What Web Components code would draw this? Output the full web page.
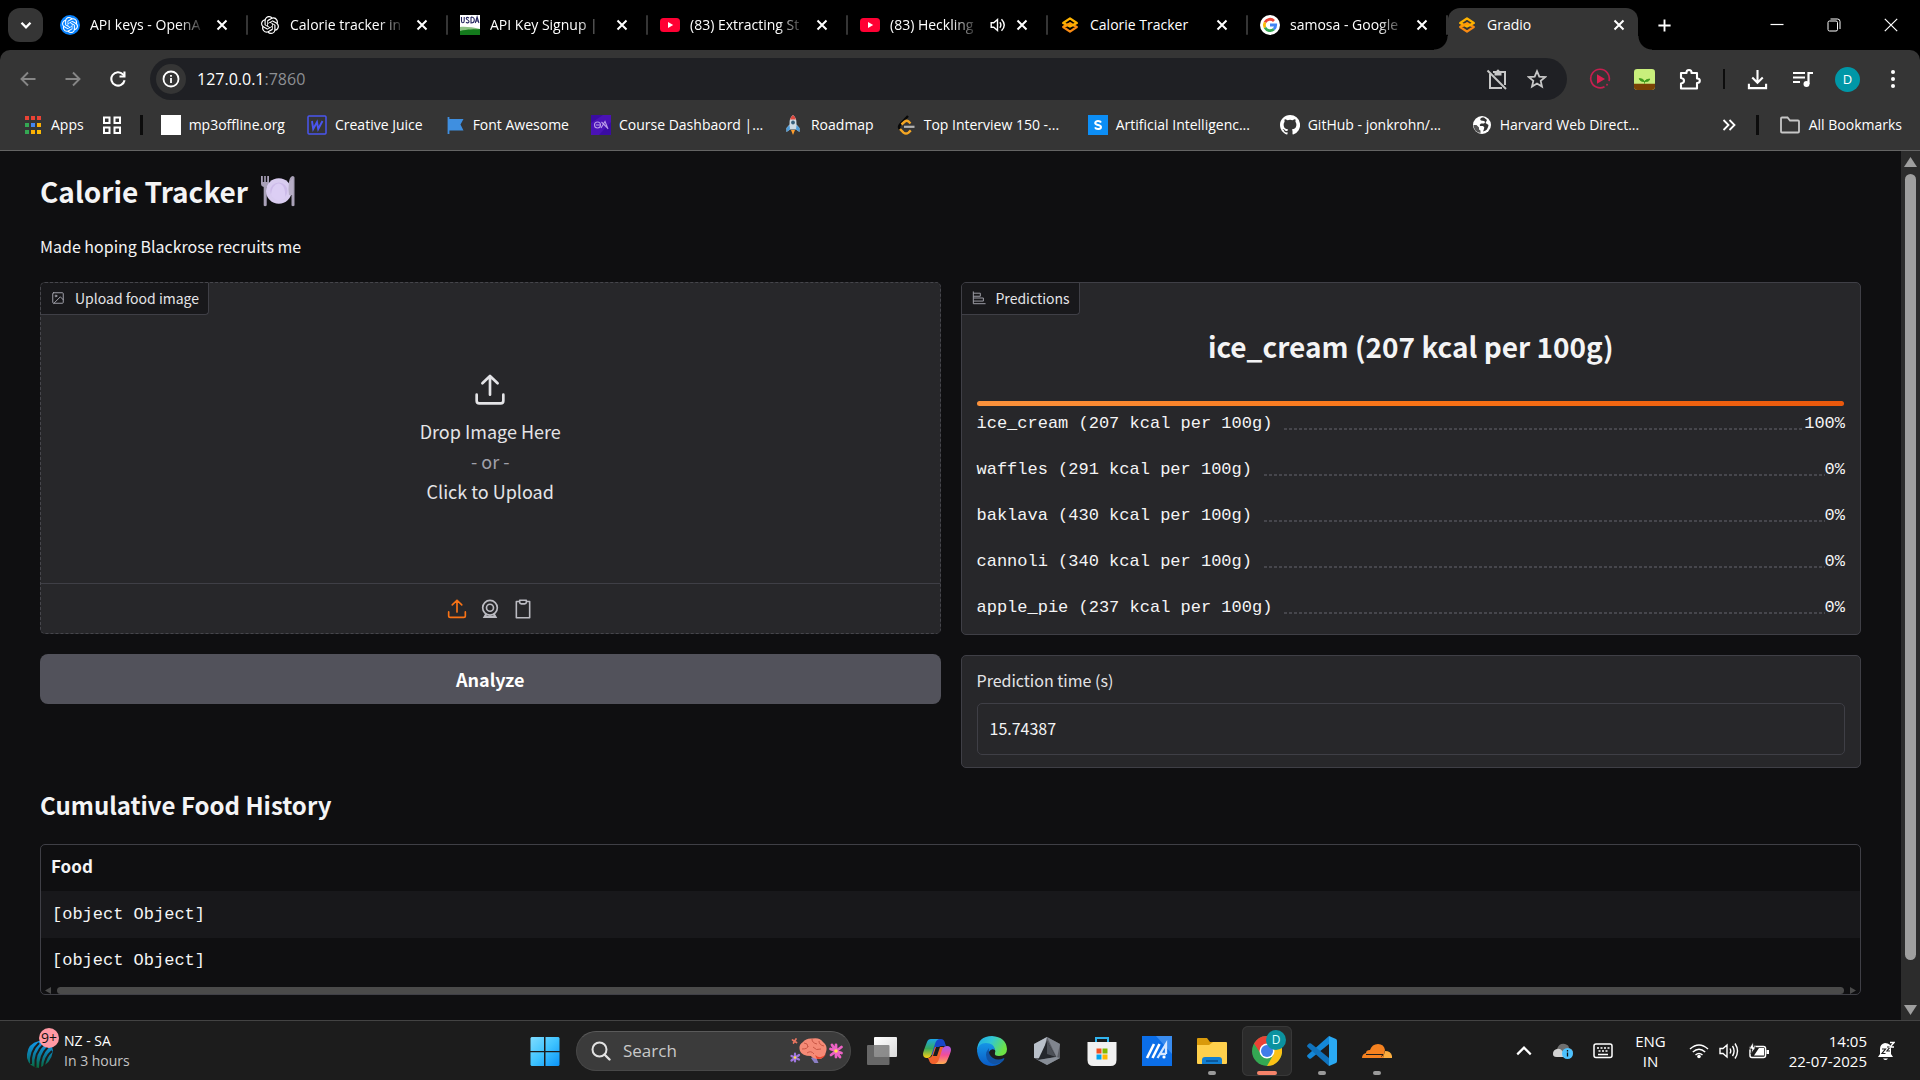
<!DOCTYPE html>
<html lang="en">
<head>
<meta charset="utf-8">
<title>Gradio</title>
<style>
  html, body { margin: 0; height: 100%; background: #0f0f11; }
  body { overflow: hidden; font-family: "Open Sans", "Noto Sans", sans-serif; color: #fff; }
</style>
</head>
<body>
<desktop-shell></desktop-shell>
<script>
const ICONS = {
  chevdown: ['0 0 20 20', '<path d="M5 7.5l5 5 5-5" fill="none" stroke="currentColor" stroke-width="2.6"/>'],
  x: ['0 0 12 12', '<path d="M1.5 1.5l9 9M10.500 1.500l-9 9" stroke="currentColor" stroke-width="2"/>'],
  knot: ['0 0 24 24', '<path fill="currentColor" d="M22.2819 9.8211a5.9847 5.9847 0 0 0-.5157-4.9108 6.0462 6.0462 0 0 0-6.5098-2.9A6.0651 6.0651 0 0 0 4.9807 4.1818a5.9847 5.9847 0 0 0-3.9977 2.9 6.0462 6.0462 0 0 0 .7427 7.0966 5.98 5.98 0 0 0 .511 4.9107 6.051 6.051 0 0 0 6.5146 2.9001A5.9847 5.9847 0 0 0 13.2599 24a6.0557 6.0557 0 0 0 5.7718-4.2058 5.9894 5.9894 0 0 0 3.9977-2.9001 6.0557 6.0557 0 0 0-.7475-7.0729zm-9.022 12.6081a4.4755 4.4755 0 0 1-2.8764-1.0408l.1419-.0804 4.7783-2.7582a.7948.7948 0 0 0 .3927-.6813v-6.7369l2.02 1.1686a.071.071 0 0 1 .038.052v5.5826a4.504 4.504 0 0 1-4.4945 4.4944zm-9.6607-4.1254a4.4708 4.4708 0 0 1-.5346-3.0137l.142.0852 4.783 2.7582a.7712.7712 0 0 0 .7806 0l5.8428-3.3685v2.3324a.0804.0804 0 0 1-.0332.0615L9.74 19.9502a4.4992 4.4992 0 0 1-6.1408-1.6464zM2.3408 7.8956a4.485 4.485 0 0 1 2.3655-1.9728V11.6a.7664.7664 0 0 0 .3879.6765l5.8144 3.3543-2.0201 1.1685a.0757.0757 0 0 1-.071 0l-4.8303-2.7865A4.504 4.504 0 0 1 2.3408 7.872zm16.5963 3.8558L13.1038 8.364 15.1192 7.2a.0757.0757 0 0 1 .071 0l4.8303 2.7913a4.4944 4.4944 0 0 1-.6765 8.1042v-5.6772a.79.79 0 0 0-.407-.667zm2.0107-3.0231l-.142-.0852-4.7735-2.7818a.7759.7759 0 0 0-.7854 0L9.409 9.2297V6.8974a.0662.0662 0 0 1 .0284-.0615l4.8303-2.7866a4.4992 4.4992 0 0 1 6.6802 4.66zM8.3065 12.863l-2.02-1.1638a.0804.0804 0 0 1-.038-.0567V6.0742a4.4992 4.4992 0 0 1 7.3757-3.4537l-.142.0805L8.704 5.459a.7948.7948 0 0 0-.3927.6813zm1.0976-2.3654l2.602-1.4998 2.6069 1.4998v2.9994l-2.5974 1.4997-2.6067-1.4997Z"/>'],
  usda: ['0 0 20 20', '<path fill="#fff" d="M0 0h20v20H0z"/><path fill="#8cc083" d="M0 12c7-.5 13 .5 20 2v6H0z"/><path fill="#137a1c" d="M0 16c8-2 14-1.500 20-2v6H0z"/><path d="M1.500 2v4q0 1.800 1.300 1.800T4.200 6V2M9 3q-2.500-1.500-2.700.400c0 1.600 2.700 1.400 2.700 3.200 0 1.600-2 1.600-3 .6M11 2v6q3.300 0 3.300-3T11 2M15.300 8l1.800-6 1.800 6M16 6h2.400" fill="none" stroke="#23245e" stroke-width="1.100"/>'],
  youtube: ['0 0 20 20', '<rect y="3" width="20" height="14" rx="3.500" fill="#ff0033"/><path d="M8 7l5.200 3L8 13z" fill="#fff"/>'],
  sound: ['0 0 16 16', '<path d="M1.200 5.800h2.500L7.500 2.500v11L3.700 10.200H1.200z" fill="none" stroke="currentColor" stroke-width="1.400"/><path d="M9.800 5.200q2.200 2.800 0 5.600M11.500 2.200q5.500 5.800 0 11.600" fill="none" stroke="currentColor" stroke-width="1.400"/>'],
  gradio: ['0 0 20 20', '<g fill="none" stroke-width="2.300" stroke-linejoin="round"><path d="M3.200 12L10 8.400l6.800 3.600L10 16.600z" stroke="#f98a12"/><path d="M3.200 8L10 3.400 16.800 8 10 11.600z" stroke="#ffb300"/><path d="M3.200 12L10 8.400l2 1" stroke="#ff9a0a"/></g>'],
  google: ['0 0 20 20', '<circle cx="10" cy="10" r="10" fill="#fff"/><g fill="none" stroke-width="2.800"><path d="M14 5.900A5.700 5.700 0 0 0 5 7.300" stroke="#ea4335"/><path d="M5 7.300a5.700 5.700 0 0 0 0 5.400" stroke="#fbbc05"/><path d="M5 12.700a5.700 5.700 0 0 0 8.800 1.500" stroke="#34a853"/><path d="M13.800 14.200A5.700 5.700 0 0 0 15.700 10H10" stroke="#4285f4"/></g>'],
  plus: ['0 0 16 16', '<path d="M8 1.500v13M1.500 8h13" stroke="currentColor" stroke-width="2"/>'],
  min: ['0 0 14 14', '<path d="M.5 6.500h13" stroke="currentColor" stroke-width="1.200"/>'],
  restore: ['0 0 14 14', '<rect x="1" y="3" width="9.500" height="10" rx="1.500" fill="none" stroke="currentColor"/><path d="M3.500 1h7a2.500 2.500 0 0 1 2.500 2.500V11" fill="none" stroke="currentColor"/>'],
  close: ['0 0 14 14', '<path d="M.8.8l12.400 12.400M13.200.8L.8 13.200" stroke="currentColor" stroke-width="1.200"/>'],
  back: ['0 0 16 16', '<path d="M15.500 8H1.500M8 1.500L1.500 8 8 14.500" fill="none" stroke="currentColor" stroke-width="1.900"/>'],
  fwd: ['0 0 16 16', '<path d="M.5 8h14M8 1.500L14.500 8 8 14.500" fill="none" stroke="currentColor" stroke-width="1.900"/>'],
  reload: ['0 0 16 16', '<path d="M14.600 9.300A6.700 6.700 0 1 1 13 3.400l1.500 1.700" fill="none" stroke="currentColor" stroke-width="2.100"/><path d="M15.500.5v6H9.500V4.400h3.900V.5z" fill="currentColor"/>'],
  info: ['0 0 18 18', '<circle cx="9" cy="9" r="7.500" fill="none" stroke="currentColor" stroke-width="1.800"/><path d="M9 8v5M9 5v1.800" stroke="currentColor" stroke-width="1.800"/>'],
  clipoff: ['0 0 22 22', '<path d="M7 4h3M13 4h6v13M16 20H4V6" fill="none" stroke="currentColor" stroke-width="2"/><path d="M1.500 2.500l18.500 18.500" stroke="currentColor" stroke-width="2"/><path d="M8.500 3h2a1.500 1.500 0 0 1 3 0h2v4.500h-7z" fill="currentColor"/>'],
  star: ['0 0 20 20', '<path d="M10 2.200l2.300 5.400 5.800.5-4.400 3.800 1.300 5.700-5-3-5 3 1.300-5.700L1.900 8.100l5.800-.5z" fill="none" stroke="currentColor" stroke-width="1.800" stroke-linejoin="miter"/>'],
  play: ['0 0 22 22', '<path d="M15.500 18.700A9.300 9.300 0 1 1 20 13" fill="none" stroke="#c51f4f" stroke-width="1.700"/><path d="M17.500 17.500l1-1.500" stroke="#c51f4f" stroke-width="1.500"/><path d="M8 6.300l8 4.700-8 4.700z" fill="#dd1f50"/>'],
  sprout: ['0 0 20 20', '<rect width="20" height="20" rx="3" fill="#c9ef7c"/><path d="M0 14h20v3a3 3 0 0 1-3 3H3a3 3 0 0 1-3-3z" fill="#7a4205"/><path d="M10 14v-2M10 12Q5.500 12 5 9q4 0 5 3 1-2.300 5-2.500-.5 2.800-5 2.500z" fill="#3f9b1c" stroke="#3f9b1c" stroke-width=".8"/>'],
  puzzle: ['0 0 22 22', '<path d="M2 5h5.500q-.2-3 2.500-3t2.500 3H18v5.500q2.800 0 2.800 2.200T18 15v5.500H2v-5q3-.3 3-2.700T2 10z" fill="none" stroke="currentColor" stroke-width="2.100" stroke-linejoin="round"/>'],
  download: ['0 0 22 22', '<path d="M11 1v13M5.500 9L11 14.500 16.500 9M2 15.500V20h18v-4.500" fill="none" stroke="currentColor" stroke-width="2.200"/>'],
  music: ['0 0 20 18', '<path d="M0 3h12M0 7.500h12M0 12h7" stroke="currentColor" stroke-width="2"/><path d="M15.500 14V3H20" fill="none" stroke="currentColor" stroke-width="2.200"/><circle cx="13.500" cy="14" r="3" fill="currentColor"/>'],
  dots: ['0 0 6 20', '<g fill="currentColor"><circle cx="3" cy="3" r="2"/><circle cx="3" cy="10" r="2"/><circle cx="3" cy="17" r="2"/></g>'],
  apps: ['0 0 20 20', '<path fill="#ea4335" d="M2 1h4v4H2zM8 1h4v4H8zM14 1h4v4h-4z"/><path fill="#34a853" d="M2 8h4v4H2zM2 15h4v4H2z"/><path fill="#4285f4" d="M8 8h4v4H8z"/><path fill="#fbaf05" d="M14 8h4v4h-4zM8 15h4v4H8z"/><path fill="#fbbc05" d="M14 15h4v4h-4z"/>'],
  grid: ['0 0 20 20', '<g fill="none" stroke="currentColor" stroke-width="2"><path d="M2 2.500h5.500V8H2zM12.500 2.500H18V8h-5.500zM2 12.500h5.500V18H2zM12.500 12.500H18V18h-5.500z"/></g>'],
  white: ['0 0 20 20', '<path fill="#fff" d="M0 0h20v20H0z"/>'],
  wbox: ['0 0 20 20', '<rect x="1" y="1" width="18" height="18" rx="1" fill="none" stroke="#4a55f0" stroke-width="1.500"/><path d="M5 6l1.200 8L10 7l1.200 7L15.500 6" fill="none" stroke="#4a55f0" stroke-width="1.900"/>'],
  flag: ['0 0 20 20', '<path d="M3.500 2v17" stroke="#3f8fe0" stroke-width="1.800"/><path d="M4 4h14.500l-3 5.500 3 6H4z" fill="#3f8fe0"/>'],
  course: ['0 0 20 20', '<path fill="#3a0ca3" d="M0 0h20v20H0z"/><path fill="#5a18c9" d="M0 8L12 0h8v7L8 20H0z" opacity=".5"/><circle cx="6.500" cy="10" r="3" fill="none" stroke="#b89be8" stroke-width="1.100"/><path d="M5 10h4.500M10 13l4-6.500L17 14M10.500 7l6 6" fill="none" stroke="#b89be8" stroke-width="1.100"/>'],
  rocket: ['0 0 20 20', '<path d="M10 0q4 3 3.500 9.500l3 3.500v4l-3.500-2.500H7L3.500 17v-4l3-3.500Q6 3 10 0z" fill="#cfdbe4"/><path d="M10 0q2.500 2 3 4.500H7Q7.500 2 10 0z" fill="#e04a3f"/><circle cx="10" cy="7.500" r="1.900" fill="#38607c"/><path d="M6.500 10l-3 3v4l3.500-2.500zM13.500 10l3 3v4L13 14.500z" fill="#4d9bd8"/><path d="M8 15h4l-2 5z" fill="#ff9d2c"/>'],
  leet: ['0 0 20 20', '<path d="M12 1L4 9.500q-2 2.500 0 4.800" fill="none" stroke="#080808" stroke-width="2.400"/><path d="M14.500 8.500l-2-2q-1.800-1.500-3.700 0L5.500 9.500M4 14l3.500 3.600q2.500 1.900 5 0l2.300-2.300" fill="none" stroke="#f5a623" stroke-width="2.400"/><path d="M8 11.800h10.500" stroke="#b3b3b3" stroke-width="2.200"/>'],
  sbox: ['0 0 20 20', '<path fill="#0c8ef5" d="M0 0h20v20H0z"/><path d="M13 7.500Q12.300 6 10 6T7.200 8c0 2.800 5.800 1.200 5.800 4 0 2.700-5 2.700-6 .4" fill="none" stroke="#fff" stroke-width="2"/>'],
  github: ['0 0 16 16', '<path fill="#fff" d="M8 0C3.580 0 0 3.580 0 8c0 3.540 2.290 6.530 5.470 7.590.4.070.55-.17.55-.38v-1.340c-2.230.48-2.690-1.070-2.690-1.070-.36-.92-.89-1.170-.89-1.170-.73-.5.050-.49.050-.49.81.06 1.230.83 1.230.83.71 1.220 1.870.87 2.330.66.070-.52.280-.87.500-1.070-1.770-.2-3.640-.89-3.640-3.950 0-.87.310-1.590.82-2.150-.08-.2-.36-1.020.08-2.120 0 0 .67-.21 2.200.82a7.600 7.600 0 0 1 4 0c1.530-1.040 2.200-.82 2.200-.82.44 1.100.16 1.920.08 2.120.51.56.82 1.270.82 2.150 0 3.070-1.870 3.750-3.650 3.950.29.25.54.73.54 1.480v2.190c0 .21.150.46.550.38A8 8 0 0 0 8 0z"/>'],
  globe: ['0 0 20 20', '<circle cx="10" cy="10" r="9" fill="#fff"/><path d="M10 2.500q-3 1.500-1 3l3 .5q2 1 0 2.500H9q-2 1-1 2.500h3q2 1 1 3l-1 2.500q5-1 5.500-6.500l-3-2 1.500-3-3-2.500z" fill="#353535"/><path d="M1.500 10h3l2.500 2.500v2l1.500 1v2.500Q2 17 1.500 10z" fill="#353535" opacity=".85"/>'],
  more: ['0 0 14 14', '<path d="M1.500 2l5 5-5 5M7.500 2l5 5-5 5" fill="none" stroke="currentColor" stroke-width="1.800"/>'],
  folder: ['0 0 22 20', '<path d="M2 3.500q0-1 1-1h5.500l2.500 3h8q1 0 1 1v10q0 1-1 1H3q-1 0-1-1z" fill="none" stroke="#c7c7c7" stroke-width="1.800"/>'],
  plate: ['0 0 34 32', '<g fill="#a9a1b8"><path d="M0 1h1.800v6h1.400V1h1.600v6h1.400V1H8v8q0 2.500-2.300 3v18.500q-1.700 1.500-3 0V12Q0 11.500 0 9z"/><path d="M33.500 2.500v28q-1.500 1.500-3 0V20H28V7q.5-5 3.500-6 2 0 2 1.500z"/></g><circle cx="17.800" cy="16" r="12.800" fill="#d9ccf0"/><circle cx="17.800" cy="16" r="8.600" fill="#cdbbe9"/><path d="M10 19.500a8.600 8.600 0 0 0 14 3.300Q25 9 17 8.500 11 10 10 19.500z" fill="#dccef4"/><path d="M28 7q-1 7 0 13h4V3z" fill="#b7aec6"/>'],
  image: ['0 0 24 24', '<g fill="none" stroke="currentColor" stroke-width="1.700" stroke-linecap="round" stroke-linejoin="round"><rect x="3" y="3" width="18" height="18" rx="1.500"/><circle cx="8.500" cy="8.500" r="1.500"/><path d="M21 15l-5-5L5 21"/></g>'],
  bars: ['0 0 32 32', '<g fill="none" stroke="currentColor" stroke-width="2.200"><path d="M3 1v28h28"/><path d="M3 5h16v7H3M3 16h23v7H3"/></g>'],
  upload: ['0 0 24 24', '<g fill="none" stroke="currentColor" stroke-width="2" stroke-linecap="round" stroke-linejoin="round"><path d="M2 15.500V20a2 2 0 0 0 2 2h16a2 2 0 0 0 2-2v-4.500M12 15.500V1.500M6.300 7L12 1.500 17.700 7"/></g>'],
  webcam: ['0 0 24 24', '<g fill="none" stroke="currentColor" stroke-width="2"><circle cx="12" cy="10.500" r="8.800"/><circle cx="12" cy="10.500" r="4.200"/><path d="M7.500 18L5.500 21.500h13L16.500 18" stroke-width="2.600"/></g>'],
  clipboard: ['0 0 24 24', '<g fill="none" stroke="currentColor" stroke-width="1.900" stroke-linejoin="round"><path d="M8 3H4v19.500h16V3h-4"/><path d="M8 1.500h8V4q0 1.800-2 1.800h-4Q8 5.800 8 4z"/></g>'],
  cricket: ['0 0 28 36', '<defs><linearGradient id="g" x1="0" y1="0" x2="0" y2="1"><stop offset="0" stop-color="#109bef"/><stop offset=".55" stop-color="#0a7a9a"/><stop offset="1" stop-color="#086a38"/></linearGradient></defs><path d="M0 25Q-1 11 12 8q13-1 14 10-2 13-14 17Q2 34 0 25z" fill="url(#g)"/><path d="M12 10Q3 18 4 31M17 11Q7 20 8.500 34M21 14q-8 8-8 21M25 18q-7 6-8 16" fill="none" stroke="#1c1c1c" stroke-width="2"/>'],
  windows: ['0 0 30 30', '<defs><linearGradient id="g" x1="0" y1="0" x2="1" y2="1"><stop offset="0" stop-color="#7fdcff"/><stop offset=".5" stop-color="#3fc3ff"/><stop offset="1" stop-color="#0b93f7"/></linearGradient></defs><path fill="url(#g)" d="M1.500 1H14v14H.500V2zM15.500 1h13l1 1v13h-14zM.500 16.200H14V30H1.500l-1-1zM15.500 16.200h14V29l-1 1h-13z"/>'],
  search: ['0 0 20 20', '<circle cx="8.500" cy="8.500" r="7" fill="none" stroke="#e2e2e2" stroke-width="2"/><path d="M13.500 13.500l5 5" stroke="#e2e2e2" stroke-width="2.400" stroke-linecap="round"/>'],
  brain: ['0 0 54 26', '<path d="M21 20l3.500 5h4l-3-7z" fill="#8b7fc4"/><path d="M10 13Q8 7 13 4q3-4 9-3.500Q30-1 33 4q5 4 3 10-2 8-9 7-5-1-6-3-9 0-11-5z" fill="#f58a76"/><path d="M25 17q6 5 11-1-2 5-9 5z" fill="#e8452c"/><path d="M14 5q4 0 4 4m4-8q0 4 5 5m2-3q0 4 5 5m-22 3q6 0 6-3m5 1q3 4 8 2m-14 4q4-3 7 1" fill="none" stroke="#c95746" stroke-width="1"/><g stroke-width="2.800" stroke-linecap="round"><path d="M46 7v12M40.500 11l11 4M51.500 9l-10.500 8M42 7l8 12" stroke="#ed62c5"/><path d="M5 15.500v8M1.500 18l7.500 3.500M9 17l-7.500 5.500" stroke="#a076e0" stroke-width="2.200"/><path d="M2.500 2l4 2.500M6 1L3.500 5" stroke="#e87560" stroke-width="1.700"/></g><circle cx="46" cy="13" r="1.800" fill="#ffe14d"/><circle cx="5" cy="19.500" r="1.300" fill="#ffe14d"/>'],
  taskview: ['0 0 30 30', '<defs><linearGradient id="g" x1="0" y1="0" x2="1" y2="1"><stop offset="0" stop-color="#fff"/><stop offset="1" stop-color="#dadada"/></linearGradient></defs><rect x="7" y="1" width="23" height="20" rx="1" fill="url(#g)"/><rect x="0" y="9" width="22.500" height="20" rx="1" fill="#777" opacity=".82"/>'],
  copilot: ['0 0 30 30', '<defs><linearGradient id="a" x1="0" y1="0" x2="0" y2="1"><stop offset="0" stop-color="#1ba5e8"/><stop offset=".5" stop-color="#39a95b"/><stop offset="1" stop-color="#ffd012"/></linearGradient><linearGradient id="b" x1="0" y1="0" x2="0" y2="1"><stop offset="0" stop-color="#a55df2"/><stop offset=".5" stop-color="#f34d97"/><stop offset="1" stop-color="#ffae50"/></linearGradient></defs><path d="M9 3h10q3 0 4 4l1 3h-4q-4 0-5 4l-2 5H7z" fill="#1747c9"/><path d="M9 3h8q-3 1-4 5l-3 9q-1 5-5 5-4 0-4-4Q1 16 5 6q1-3 4-3z" fill="url(#a)"/><path d="M21 28H11q-3 0-4-4l-1-2q4 0 5-5l2-6h8z" fill="#f2622d"/><path d="M21 28h-8q3-1 4-5l3-9q1-4 5-4t4 4q0 2-4 11-1 3-4 3z" fill="url(#b)"/><path d="M14 11h4l-3 9h-4z" fill="#1c1c1c"/>'],
  edge: ['0 0 30 30', '<defs><linearGradient id="a" x1="0" y1="0" x2="1" y2=".4"><stop offset="0" stop-color="#1ca8e8"/><stop offset=".5" stop-color="#32c7d2"/><stop offset="1" stop-color="#6de245"/></linearGradient><linearGradient id="b" x1="0" y1="0" x2="0" y2="1"><stop offset="0" stop-color="#1595e6"/><stop offset="1" stop-color="#0a5bc5"/></linearGradient></defs><path d="M0 14Q1 0 15 0q14 1 15 13 0 7-8 7-5 0-4-3 1-2-1-5Q11 5 0 14z" fill="url(#a)"/><path d="M0 15Q1 7 9 7q8 0 9 7-4-2-6 2-2 6 4 10 6 3 11-3-4 7-12 7Q2 30 0 15z" fill="url(#b)"/><path d="M12 12q-6 7 0 14 7 5 14-1 2-2 1-3-6 3-11 0-5-3-4-10z" fill="#1153a4"/>'],
  hexa: ['0 0 30 30', '<path d="M15 1l13 7v14l-13 7-13-7V8z" fill="#5a5d64"/><path d="M15 1L2 8v14l8 0z" fill="#b9c0c9"/><path d="M15 1l13 7-3 14z" fill="#80858e"/><path d="M15 5l9 16-18 3z" fill="#24272c"/><path d="M2 22l4 2 18-3 4 1-13 7z" fill="#888e97"/><path d="M15 5v13l9 3z" fill="#4c5057"/>'],
  store: ['0 0 30 30', '<path d="M9 6V2h12v4" fill="none" stroke="#31b4ee" stroke-width="2"/><path d="M.5 6h29v18q0 6-6 6h-17q-6 0-6-6z" fill="#f1f1f1"/><path fill="#f25022" d="M9.500 12.500h5v5h-5z"/><path fill="#7fba00" d="M15.500 12.500h5v5h-5z"/><path fill="#00a4ef" d="M9.500 18.500h5v5h-5z"/><path fill="#ffb900" d="M15.500 18.500h5v5h-5z"/>'],
  asus: ['0 0 30 30', '<path fill="#0b6ee8" d="M0 0h30v30H0z"/><path fill="#5aa1f5" d="M14 0h16v18z" opacity=".6"/><path d="M5 22L12 8M10.500 22l7-14" stroke="#fff" stroke-width="2.600"/><path d="M15.500 22L24 8v10M18 18h6" fill="none" stroke="#d5e7ff" stroke-width="2.300"/><circle cx="22" cy="21" r="1.600" fill="#fff"/>'],
  explorer: ['0 0 30 30', '<path d="M0 3q0-1 1-1h9l3 4h10v6H0z" fill="#d99a0b"/><path d="M0 9h12l4-3h13q1 0 1 1v20q0 1-1 1H1q-1 0-1-1z" fill="#ffd04c"/><path d="M5 28v-4q0-3 3-3h14q3 0 3 3v4z" fill="#127fd2"/><path d="M9 25h12" stroke="#0a4b89" stroke-width="1.500"/>'],
  chrome: ['0 0 30 30', '<circle cx="15" cy="15" r="15" fill="#34a853"/><path d="M2 7.500A15 15 0 0 1 28 7.500H15L9 18z" fill="#ea4335"/><path d="M28 7.500A15 15 0 0 1 15 30l6.500-11.500L21 7.500z" fill="#fbc116"/><circle cx="15" cy="15" r="7.500" fill="#fff"/><circle cx="15" cy="15" r="6" fill="#3f7de8"/>'],
  vscode: ['0 0 30 30', '<path d="M22 0l7 3q1 .5 1 2v20q0 1.500-1 2l-7 3z" fill="#2aa9f3"/><path d="M22 0v8L4 22.500q-1 .7-2 0L.5 21q-.8-1 0-2z" fill="#1488d8"/><path d="M22 30v-8L4 7.500q-1-.7-2 0L.5 9q-.8 1 0 2z" fill="#1073bd"/>'],
  cloudflare: ['0 0 30 30', '<path d="M0 22q0-4 4-5 0-3 4-3 2-6 8-6 6 0 7 6l-2 8z" fill="#f48120"/><path d="M21 22l2-7q6 0 7 5v2z" fill="#faad3f"/><path d="M4 18.500h17l-1.500 2" stroke="#1c1c1c" stroke-width="1" fill="none"/>'],
  chevup: ['0 0 16 16', '<path d="M2 11l6-6 6 6" fill="none" stroke="currentColor" stroke-width="1.900"/>'],
  cloud: ['0 0 20 16', '<path d="M0 11q0-4 4-5 2-6 8-5 4 1 4 4 4 1 4 5 0 4-4 4H4q-4 0-4-3z" fill="#6f6f6f"/><path d="M0 11q0-4 4-5 5-2 8 8H4q-4 0-4-3z" fill="#d2d2d2"/><circle cx="14.500" cy="10.500" r="5.500" fill="#4cc2ff"/><path d="M14.500 9.500v4M14.500 7v1.400" stroke="#111" stroke-width="1.300"/>'],
  keyboard: ['0 0 20 16', '<rect x="1" y="1" width="18" height="13.500" rx="2" fill="none" stroke="currentColor" stroke-width="1.500"/><path d="M4 5h2M7.500 5h2M11 5h2M14.500 5h2M5.500 8h2M9 8h2M12.500 8h2M5 11.500h10" stroke="currentColor" stroke-width="1.500"/>'],
  wifi: ['0 0 20 16', '<g fill="none" stroke="currentColor" stroke-width="1.500"><path d="M1 6q9-8 18 0M3.800 9q6.200-5.500 12.400 0M6.500 12q3.500-3 7 0"/></g><circle cx="10" cy="13.500" r="1.800" fill="currentColor"/>'],
  volume: ['0 0 20 18', '<g fill="none" stroke="currentColor" stroke-width="1.400"><path d="M1 6.500h3L8 3v12L4 11.500H1zM11 6.500q1.500 2.500 0 5M13.500 4q3.200 5 0 10M16 1.500q5 7.500 0 15"/></g>'],
  battery: ['0 0 20 18', '<rect x="1" y="4.500" width="15.500" height="11" rx="2" fill="none" stroke="currentColor" stroke-width="1.500"/><path d="M5 13.500l5-7.500h5v7.500zM17.500 8H20v4h-2.500z" fill="currentColor"/><path d="M4 0L0 7h3l-1 5 5-7H4.500z" fill="currentColor" stroke="#1c1c1c" stroke-width=".8"/>'],
  bell: ['0 0 18 20', '<path d="M1 16l2-3V8q0-5 5-6 6 0 6 6v5l2 3zM6 17.500h5q-2.500 3-5 0z" fill="currentColor"/><path d="M5 8h3.500L5 12.500h3.500M10 6h3l-3 4h3" fill="none" stroke="#1c1c1c" stroke-width="1.200"/><path d="M13 1.500h4l-4 4.500h4" fill="none" stroke="currentColor" stroke-width="1.400"/>'],
};

function define(name, html, setup) {
  const t = document.createElement('template');
  t.innerHTML = html;
  customElements.define(name, class extends HTMLElement {
    connectedCallback() {
      if (this.shadowRoot) return;
      this.attachShadow({ mode: 'open' }).appendChild(t.content.cloneNode(true));
      if (setup) setup(this, this.shadowRoot);
    }
  });
}

/* <ui-icon name w h> draws one glyph from ICONS */
define('ui-icon', `<style>:host{display:block;flex:none}svg{display:block}</style>`, (el, root) => {
  const [box, body] = ICONS[el.getAttribute('name')];
  const w = el.getAttribute('w') || 20, h = el.getAttribute('h') || w;
  const holder = document.createElement('template');
  holder.innerHTML = `<svg viewBox="${box}" width="${w}" height="${h}" aria-hidden="true">${body}</svg>`;
  root.appendChild(holder.content);
});

define('browser-tab', `<style>
  :host{display:flex;align-items:center;gap:10px;flex:0 1 200px;min-width:0;height:34px;box-sizing:border-box;padding:0 21px 0 11px;position:relative}
  .t{flex:1;min-width:0;white-space:nowrap;overflow:hidden;font-size:14px;line-height:20px}
  :host([fade]) .t{-webkit-mask-image:linear-gradient(90deg,#000 calc(100% - 28px),transparent);mask-image:linear-gradient(90deg,#000 calc(100% - 28px),transparent)}
  button{all:unset;display:block}
  :host(:not([active]))::after{content:"";position:absolute;right:1px;top:7px;width:2px;height:20px;background:#353535;border-radius:1px}
  :host([active]){background:#353535;flex-basis:190px;height:42px;padding:0 13px 8px 9px;border-radius:12px 12px 0 0;margin-left:-1px}
  :host([active])::after,:host([active])::before{content:"";position:absolute;bottom:0;width:14px;height:14px}
  :host([active])::before{left:-14px;background:radial-gradient(circle at 0 0,transparent 13px,#353535 14px)}
  :host([active])::after{right:-14px;background:radial-gradient(circle at 100% 0,transparent 13px,#353535 14px)}
  </style><slot name="icon"></slot><span class="t"><slot></slot></span><slot name="extra"></slot><button aria-label="Close tab"><ui-icon name="x" w="12"></ui-icon></button>`);

define('tab-strip', `<style>
  :host{display:flex;background:#000;height:50px;align-items:flex-start;padding:8px 22px 0 8px;box-sizing:border-box}
  button{all:unset;display:flex;align-items:center;justify-content:center}
  .find{width:35px;height:34px;border-radius:12px;background:#353535;margin-right:6px;flex:none}
  .new{width:36px;height:34px;margin-left:8px;flex:none}
  .win{margin-left:auto;display:flex;gap:43px;height:34px;align-items:center;flex:none}
  .blue{background:#0a84ff;border-radius:50%;padding:2px}
  </style>
  <button class="find" aria-label="Search tabs"><ui-icon name="chevdown" w="18"></ui-icon></button>
  <browser-tab fade><ui-icon class="blue" slot="icon" name="knot" w="16"></ui-icon>API keys - OpenA</browser-tab>
  <browser-tab fade><ui-icon slot="icon" name="knot" w="20" h="18"></ui-icon>Calorie tracker in</browser-tab>
  <browser-tab fade><ui-icon slot="icon" name="usda"></ui-icon>API Key Signup |</browser-tab>
  <browser-tab fade><ui-icon slot="icon" name="youtube"></ui-icon>(83) Extracting St</browser-tab>
  <browser-tab fade><ui-icon slot="icon" name="youtube"></ui-icon>(83) Heckling<ui-icon slot="extra" name="sound" w="16"></ui-icon></browser-tab>
  <browser-tab><ui-icon slot="icon" name="gradio"></ui-icon>Calorie Tracker</browser-tab>
  <browser-tab fade><ui-icon slot="icon" name="google"></ui-icon>samosa - Google</browser-tab>
  <browser-tab active><ui-icon slot="icon" name="gradio"></ui-icon>Gradio</browser-tab>
  <button class="new" aria-label="New tab"><ui-icon name="plus" w="15"></ui-icon></button>
  <div class="win"><button aria-label="Minimise"><ui-icon name="min" w="14"></ui-icon></button><button aria-label="Restore"><ui-icon name="restore" w="14"></ui-icon></button><button aria-label="Close"><ui-icon name="close" w="14"></ui-icon></button></div>`);

define('tool-bar', `<style>
  :host{display:flex;align-items:center;background:#353535;height:50px;padding:8px 5px 0 10px;box-sizing:border-box;border-radius:10px 10px 0 0}
  button{all:unset;display:flex;align-items:center;justify-content:center;flex:none}
  nav{display:flex;gap:9px;margin-right:14px}
  nav button{width:36px;height:36px}
  .dim{color:#868686}
  .omni{flex:1;display:flex;align-items:center;background:#1f2024;border-radius:21px;height:42px;padding:0 10px 0 6px;margin-right:10px;font-size:16px;line-height:20px}
  .info{width:30px;height:30px;border-radius:50%;background:#353535;margin-right:11px}
  input{all:unset;field-sizing:content;color:#fff}
  .port{color:#8d8f93;flex:1}
  .in{width:40px;color:#c7c7c7}
  .ext{width:45px;height:36px}
  .sep{width:23px;display:flex;justify-content:center}
  .sep::before{content:"";width:2px;height:20px;background:#0c0c0c}
  .me{width:25px;height:25px;border-radius:50%;background:#0097a7;font-size:13px;display:flex;align-items:center;justify-content:center}
  </style>
  <nav><button class="dim" aria-label="Back"><ui-icon name="back" w="16"></ui-icon></button><button class="dim" aria-label="Forward"><ui-icon name="fwd" w="16"></ui-icon></button><button aria-label="Reload"><ui-icon name="reload" w="16"></ui-icon></button></nav>
  <div class="omni"><button class="info" aria-label="Site information"><ui-icon name="info" w="18"></ui-icon></button><input aria-label="Address" value="127.0.0.1"><span class="port">:7860</span>
  <button class="in" aria-label="Clipboard blocked"><ui-icon name="clipoff" w="22"></ui-icon></button><button class="in" aria-label="Bookmark"><ui-icon name="star"></ui-icon></button></div>
  <button class="ext" aria-label="Player"><ui-icon name="play" w="22"></ui-icon></button><button class="ext" aria-label="Garden"><ui-icon name="sprout" w="21"></ui-icon></button><button class="ext" aria-label="Extensions"><ui-icon name="puzzle" w="22"></ui-icon></button>
  <span class="sep"></span>
  <button class="ext" aria-label="Downloads"><ui-icon name="download" w="21"></ui-icon></button><button class="ext" aria-label="Media"><ui-icon name="music" w="20" h="18"></ui-icon></button><button class="ext" aria-label="Profile"><span class="me">D</span></button><button class="ext" aria-label="Menu"><ui-icon name="dots" w="6" h="20"></ui-icon></button>`);

define('book-mark', `<style>
  :host{display:block;flex:none}
  a{display:flex;align-items:center;gap:8px;color:#fff;text-decoration:none;font-size:14px;line-height:20px;white-space:nowrap}
  :host([cut]) span{width:142px}
  </style><a href="#"><slot name="icon"></slot><span><slot></slot></span></a>`);

define('bookmark-bar', `<style>
  :host{display:flex;align-items:center;background:#353535;height:51px;padding:0 18px 0 23px;box-sizing:border-box;border-bottom:1px solid #646464;overflow:hidden}
  .sep{width:3px;height:20px;background:#0c0c0c;flex:none}
  .pre,.list,.end{display:flex;align-items:center;flex:none}
  .pre{gap:18px;margin-right:18px}
  .list{gap:22px}
  .end{margin-left:auto;gap:20px}
  </style>
  <div class="pre"><book-mark><ui-icon slot="icon" name="apps"></ui-icon>Apps</book-mark>
  <ui-icon name="grid"></ui-icon><span class="sep"></span></div>
  <div class="list">
  <book-mark><ui-icon slot="icon" name="white"></ui-icon>mp3offline.org</book-mark>
  <book-mark><ui-icon slot="icon" name="wbox"></ui-icon>Creative Juice</book-mark>
  <book-mark><ui-icon slot="icon" name="flag"></ui-icon>Font Awesome</book-mark>
  <book-mark cut><ui-icon slot="icon" name="course"></ui-icon>Course Dashbaord |...</book-mark>
  <book-mark><ui-icon slot="icon" name="rocket"></ui-icon>Roadmap</book-mark>
  <book-mark cut><ui-icon slot="icon" name="leet"></ui-icon>Top Interview 150 -...</book-mark>
  <book-mark cut><ui-icon slot="icon" name="sbox"></ui-icon>Artificial Intelligenc...</book-mark>
  <book-mark cut><ui-icon slot="icon" name="github"></ui-icon>GitHub - jonkrohn/...</book-mark>
  <book-mark cut><ui-icon slot="icon" name="globe"></ui-icon>Harvard Web Direct...</book-mark></div>
  <div class="end"><ui-icon name="more" w="14"></ui-icon><span class="sep"></span><book-mark><ui-icon slot="icon" name="folder" w="22" h="20"></ui-icon>All Bookmarks</book-mark></div>`);

define('block-label', `<style>
  :host{display:flex;align-items:center;gap:10px;align-self:flex-start;box-sizing:border-box;height:32px;padding:0 9px 1px 10px;background:#18181b;border:solid #3f3f46;border-width:0 1px 1px 0;border-radius:4px 0 4px 0;font-size:14px;line-height:20px;color:#e4e4e7}
  ::slotted(ui-icon){color:#a1a1aa}
  </style><slot name="icon"></slot><span><slot></slot></span>`);

define('image-drop', `<style>
  :host{display:flex;flex-direction:column;box-sizing:border-box;height:352px;border:1px dashed #46464c;border-radius:5px;background:#27272a;color:#e4e4e7}
  button{all:unset}
  .drop{flex:1;display:flex;flex-direction:column;align-items:center;justify-content:center;text-align:center;font-size:18px;line-height:30px;padding-bottom:19px;box-sizing:border-box}
  .drop ui-icon{margin-bottom:10px}
  .or{color:#a1a1aa}
  .src{display:flex;justify-content:center;align-items:center;gap:13px;height:50px;box-sizing:border-box;border-top:1px solid #3f3f46;color:#bbbbc2}
  .on{color:#f97316}
  </style>
  <block-label><ui-icon slot="icon" name="image" w="14"></ui-icon>Upload food image</block-label>
  <button class="drop"><ui-icon name="upload" w="32"></ui-icon><div>Drop Image Here</div><div class="or">- or -</div><div>Click to Upload</div></button>
  <div class="src"><button class="on" aria-label="Upload file"><ui-icon name="upload" w="20"></ui-icon></button><button aria-label="Webcam"><ui-icon name="webcam" w="20"></ui-icon></button><button aria-label="Paste"><ui-icon name="clipboard" w="20"></ui-icon></button></div>`);

define('conf-row', `<style>
  :host{display:flex;align-items:center;height:26px;font-family:"Liberation Mono",monospace;font-size:17px;line-height:26px;color:#f4f4f5}
  i{flex:1;height:2px;background:repeating-linear-gradient(90deg,#46464c 0 3px,transparent 3px 5px);margin:9px 0 0 12px}
  </style><span><slot></slot></span><i></i><span class="v"></span>`, (el, root) => { root.querySelector('.v').textContent = el.getAttribute('value'); });

define('label-result', `<style>
  :host{display:flex;flex-direction:column;box-sizing:border-box;height:353px;border:1px solid #3f3f46;border-radius:5px;background:#27272a}
  h2{margin:6px 0 30px;font-size:28px;line-height:50px;font-weight:600;text-align:center;color:#f4f4f5}
  .bar{height:5px;border-radius:3px;background:linear-gradient(90deg,#fb923c,#f97316 50%,#ea580c);margin:0 16px 5px 15px}
  .rows{display:flex;flex-direction:column;gap:20px;padding:0 15px}
  </style>
  <block-label><ui-icon slot="icon" name="bars" w="14"></ui-icon>Predictions</block-label>
  <h2>ice_cream (207 kcal per 100g)</h2><div class="bar"></div>
  <div class="rows"><conf-row value="100%">ice_cream (207 kcal per 100g)</conf-row><conf-row value="0%">waffles (291 kcal per 100g)</conf-row><conf-row value="0%">baklava (430 kcal per 100g)</conf-row><conf-row value="0%">cannoli (340 kcal per 100g)</conf-row><conf-row value="0%">apple_pie (237 kcal per 100g)</conf-row></div>`);

define('number-field', `<style>
  :host{display:block;box-sizing:border-box;border:1px solid #3f3f46;border-radius:5px;background:#27272a;padding:11px 15px 12px}
  label{display:block;font-size:16px;line-height:26px;margin-bottom:10px;color:#e4e4e7}
  input{display:block;box-sizing:border-box;width:100%;height:52px;margin:0;padding:0 12px 2px;border:1px solid #3f3f46;border-radius:5px;background:#27272a;color:#f4f4f5;font:inherit;font-size:16px;outline:none}
  </style><label for="n">Prediction time (s)</label><input id="n" value="15.74387">`);

define('history-table', `<style>
  :host{display:block;border:1px solid #3f3f46;border-radius:5px;overflow:hidden}
  table{width:100%;border-collapse:collapse;color:#f4f4f5}
  th,td{text-align:left;padding:0 11px;height:46px;font-size:17px;line-height:26px;box-sizing:border-box}
  th{font-weight:700;padding:0 10px 4px}
  td{font-family:"Liberation Mono",monospace}
  tbody tr:first-child td{background:#18181b;height:47px}
  .sb{display:flex;align-items:center;gap:6px;height:8px;padding:2px 4px 0}
  .sb b{flex:1;height:7px;border-radius:4px;background:#4a4a4a}
  .sb svg{display:block}
  </style>
  <table><thead><tr><th>Food</th></tr></thead><tbody><tr><td>[object Object]</td></tr><tr><td>[object Object]</td></tr></tbody></table>
  <div class="sb"><svg width="6" height="7"><path d="M6 0v7L0 3.500z" fill="#4a4a4a"/></svg><b></b><svg width="6" height="7"><path d="M0 0v7l6-3.500z" fill="#4a4a4a"/></svg></div>`);

define('calorie-app', `<style>
  :host{display:block;padding:0 40px;font-family:"Noto Sans CJK SC","Noto Sans",sans-serif;color:#f4f4f5;min-width:0}
  h1{display:flex;align-items:center;gap:13px;margin:19px 0 20px;font-size:28px;line-height:42px;font-weight:600}
  p{margin:0 0 22px;font-size:16px;line-height:28px}
  .cols{display:grid;grid-template-columns:1fr 1fr;gap:20px;align-items:start}
  .col{display:flex;flex-direction:column;gap:20px;min-width:0}
  button{all:unset;box-sizing:border-box;height:50px;border-radius:8px;background:#52525b;color:#fff;text-align:center;font-size:18px;line-height:48px;font-weight:600}
  h2{margin:17px 0 19px;font-size:24px;line-height:40px;font-weight:600}
  </style>
  <h1>Calorie Tracker <ui-icon name="plate" w="34" h="32"></ui-icon></h1>
  <p>Made hoping Blackrose recruits me</p>
  <div class="cols"><div class="col"><image-drop></image-drop><button>Analyze</button></div>
  <div class="col"><label-result></label-result><number-field></number-field></div></div>
  <h2>Cumulative Food History</h2>
  <history-table></history-table>`);

define('page-scroll', `<style>
  :host{display:flex;flex-direction:column;align-items:center;background:#2c2c2c;padding:6px 0 5px;box-sizing:border-box}
  b{flex:1;width:11px;border-radius:6px;background:#9f9f9f;margin:7px 0 45px}
  svg{display:block}
  </style><svg width="13" height="10"><path d="M6.500 0L13 10H0z" fill="#9f9f9f"/></svg><b></b><svg width="13" height="10"><path d="M0 0h13L6.500 10z" fill="#9f9f9f"/></svg>`);

define('task-app', `<style>
  :host{display:flex;align-items:center;justify-content:center;width:55px;height:60px;flex:none;position:relative}
  .c{display:flex;align-items:center;justify-content:center;width:50px;height:50px;border-radius:6px}
  :host([on])::after{content:"";position:absolute;bottom:6px;width:8px;height:4px;border-radius:2px;background:#9a9a9a}
  :host([live])::after{width:20px;background:#f5836a}
  :host([live]) .c{background:#2b2b2b;box-shadow:inset 0 0 0 1px #383838}
  ::slotted(span){position:absolute;top:9px;right:8px;width:20px;height:20px;border-radius:50%;background:#0b929f;font-size:12px;line-height:20px;text-align:center;color:#dff}
  </style><div class="c"><slot></slot></div>`);

define('task-bar', `<style>
  :host{display:grid;grid-template-columns:1fr auto 1fr;height:60px;box-sizing:border-box;background:#1c1c1c;border-top:1px solid #434343;font-size:14px;line-height:20px;color:#fff}
  .w{display:flex;align-items:center;gap:9px;padding-left:27px;position:relative}
  .w small{display:block;font-size:14px;color:#c4c4c4}
  .badge{position:absolute;left:39px;top:7px;width:20px;height:20px;border-radius:50%;background:#ff99a4;color:#111;font-size:14px;line-height:20px;text-align:center}
  .mid{display:flex;align-items:center;padding-left:6px}
  .start{width:46px;display:flex;justify-content:center;margin-right:8px}
  .q{display:flex;align-items:center;width:275px;height:40px;box-sizing:border-box;border-radius:20px;background:#3b3b3b;border:1px solid #484848;border-top-color:#5a5a5a;padding:0 6px 0 14px;gap:12px;margin-right:3px}
  .q input{all:unset;flex:1;min-width:0;font-size:17px;line-height:24px}
  .q input::placeholder{color:#c9c9c9;opacity:1}
  .tray{display:flex;align-items:center;justify-content:flex-end;padding-right:25px;gap:10px;font-size:15px}
  .g{display:flex;gap:20px}
  .lang{text-align:center;margin:0 13px 0 12px}
  .time{text-align:right;margin-left:10px}
  </style>
  <div class="w"><ui-icon name="cricket" w="28" h="36"></ui-icon><span class="badge">9+</span><div>NZ - SA<small>In 3 hours</small></div></div>
  <div class="mid"><div class="start"><ui-icon name="windows" w="30"></ui-icon></div>
  <div class="q"><ui-icon name="search" w="20"></ui-icon><input type="text" placeholder="Search" aria-label="Search"><ui-icon name="brain" w="54" h="26"></ui-icon></div>
  <task-app><ui-icon name="taskview" w="30"></ui-icon></task-app><task-app><ui-icon name="copilot" w="30"></ui-icon></task-app><task-app><ui-icon name="edge" w="30"></ui-icon></task-app><task-app><ui-icon name="hexa" w="30"></ui-icon></task-app><task-app><ui-icon name="store" w="30"></ui-icon></task-app><task-app><ui-icon name="asus" w="30"></ui-icon></task-app><task-app on><ui-icon name="explorer" w="30"></ui-icon></task-app><task-app on live><ui-icon name="chrome" w="30"></ui-icon><span>D</span></task-app><task-app on><ui-icon name="vscode" w="30"></ui-icon></task-app><task-app on><ui-icon name="cloudflare" w="30"></ui-icon></task-app></div>
  <div class="tray"><div class="g"><ui-icon name="chevup" w="18"></ui-icon><ui-icon name="cloud" w="20" h="18"></ui-icon><ui-icon name="keyboard" w="20" h="18"></ui-icon></div><div class="lang">ENG<br>IN</div><ui-icon name="wifi" w="20" h="18"></ui-icon><ui-icon name="volume" w="20" h="18"></ui-icon><ui-icon name="battery" w="20" h="18"></ui-icon><div class="time">14:05<br>22-07-2025</div><ui-icon name="bell" w="18" h="20"></ui-icon></div>`);

define('desktop-shell', `<style>
  :host{display:flex;flex-direction:column;height:100vh;background:#0f0f11}
  .chrome{background:#000}
  main{flex:1;min-height:0;display:grid;grid-template-columns:minmax(0,1fr) 19px;overflow:hidden}
  </style><div class="chrome"><tab-strip></tab-strip><tool-bar></tool-bar><bookmark-bar></bookmark-bar></div>
  <main><calorie-app></calorie-app><page-scroll></page-scroll></main><task-bar></task-bar>`);
</script>
</body>
</html>
